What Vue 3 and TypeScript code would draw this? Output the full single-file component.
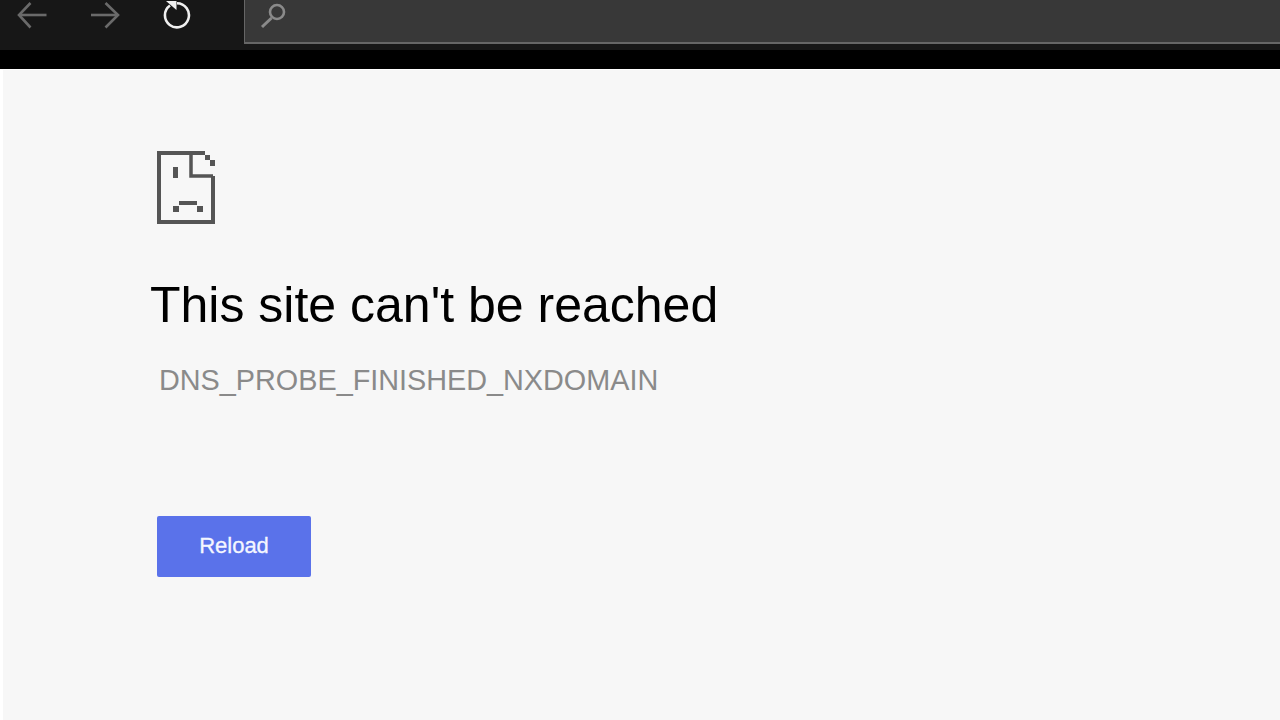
<template>
  <div class="browser">
    <header class="toolbar">
      <nav class="nav">
        <svg class="nav-icon back" width="32" height="30" viewBox="0 0 32 30" fill="none" stroke="#6a6a6a" stroke-width="2.6">
          <path d="M29.500 15H2" />
          <path d="M13.500 3 2 15l11.500 12.500" />
        </svg>
        <svg class="nav-icon forward" width="32" height="30" viewBox="0 0 32 30" fill="none" stroke="#6a6a6a" stroke-width="2.6">
          <path d="M1 15h27" />
          <path d="M15.500 3 28 15 15.500 27.500" />
        </svg>
        <svg class="nav-icon reload" width="32" height="30" viewBox="0 0 32 30" fill="none">
          <path d="M7 5.500a12 12 0 1 0 7-2.200" stroke="#efefef" stroke-width="2.600" />
          <path d="M3 1h10.500v9z" fill="#efefef" />
        </svg>
      </nav>
      <div class="address">
        <svg width="28" height="30" viewBox="0 0 28 30" fill="none" stroke="#8a8a8a">
          <circle cx="18" cy="12" r="7" stroke-width="2.600" />
          <path d="M12.500 18 3 27" stroke-width="3" />
        </svg>
      </div>
    </header>
    <div class="black-strip"></div>
    <main class="page">
      <svg class="sad-page" width="58" height="73" viewBox="0 0 58 73" fill="none" stroke="#555" stroke-width="4">
        <path d="M48 2H2v69h54V25" />
        <path d="M34 2v23h22" stroke-width="3.500" />
        <g fill="#555" stroke="none">
          <rect x="48" y="4" width="5" height="5" />
          <rect x="53" y="9" width="5" height="6" />
          <rect x="16" y="16" width="5" height="11" />
          <rect x="22" y="50" width="18" height="4" />
          <rect x="16" y="55" width="6" height="6" />
          <rect x="40" y="55" width="6" height="6" />
        </g>
      </svg>
      <h1 class="title">This site can't be reached</h1>
      <p class="code">DNS_PROBE_FINISHED_NXDOMAIN</p>
      <button class="reload-btn">Reload</button>
    </main>
  </div>
</template>

<script setup lang="ts">
</script>

<style>
html, body {
  margin: 0;
  background: #f7f7f7;
}
</style>

<style scoped>
.browser {
  width: 1280px;
  height: 720px;
  overflow: hidden;
  display: flex;
  flex-direction: column;
  font-family: "Liberation Sans", Arial, sans-serif;
}

.toolbar {
  height: 50px;
  background: #171717;
  display: flex;
  align-items: flex-start;
}

.nav {
  width: 244px;
  height: 30px;
  display: flex;
  padding-left: 17px;
  box-sizing: border-box;
}

.nav-icon {
  flex: none;
}

.forward {
  margin-left: 41px;
}

.reload {
  margin-left: 41px;
}

.address {
  flex: 1;
  height: 44px;
  box-sizing: border-box;
  background: #383838;
  border-left: 1px solid #666;
  border-bottom: 2px solid #666;
  padding-left: 14px;
}

.black-strip {
  height: 19px;
  background: #000;
}

.page {
  flex: 1;
  background: #f7f7f7;
  border-top: 1px solid #fff;
  border-left: 3px solid #fff;
  padding: 81px 0 0 147px;
  display: flex;
  flex-direction: column;
  align-items: flex-start;
}

.sad-page {
  margin-left: 7px;
}

.title {
  margin: 51px 0 0;
  font-size: 50px;
  line-height: 60px;
  font-weight: 400;
  color: #000;
}

.code {
  margin: 27px 0 0 9px;
  font-size: 28.800px;
  line-height: 36px;
  color: #8a8a8a;
}

.reload-btn {
  margin: 118px 0 0 7px;
  width: 154px;
  height: 61px;
  border: none;
  border-radius: 2px;
  background: #5a72ea;
  color: #f4f6ff;
  font-family: inherit;
  font-size: 22px;
  -webkit-text-stroke: 0.3px #f4f6ff;
  padding: 0 0 2px;
}
</style>
